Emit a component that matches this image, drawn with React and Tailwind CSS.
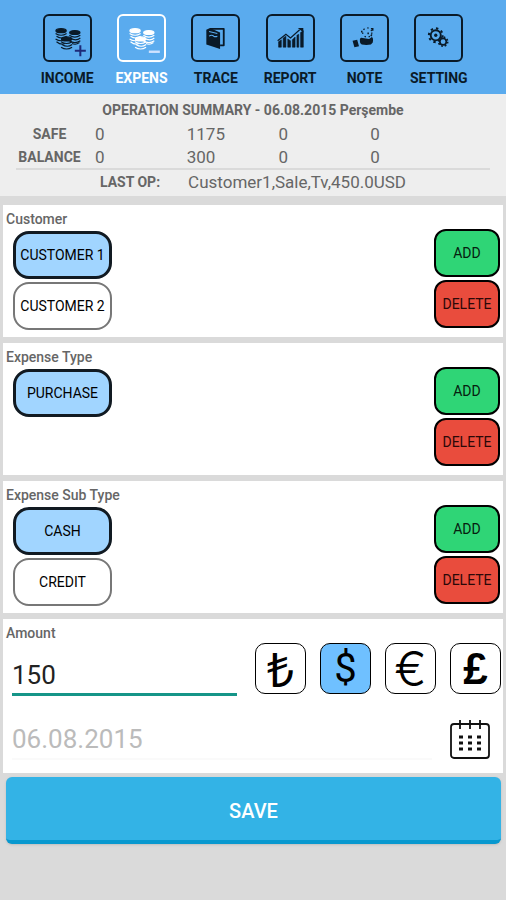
import React, { useState } from 'react';

const CoinsIcon = ({ minus }) => (
    <svg viewBox="0 0 48 48" className="w-full h-full" aria-hidden="true">
        {[[17, 16], [32, 18], [23, 25]].map(([x, y]) => (
            <g key={x} fill="none" stroke="currentColor" strokeWidth="1.3">
                <path d={`M${x - 6} ${y + 3}q6 4 12 0M${x - 5} ${y + 6}q6 4 11 0M${x - 6} ${y + 9}q6 4 12 0`} />
                <ellipse cx={x} cy={y} rx="5.6" ry="2.2" fill="currentColor" />
            </g>
        ))}
        <path d="M12 28q5 4 9 2M29 30q4 2 8-1" fill="none" stroke="currentColor" strokeWidth="1.3" />
        {minus
            ? <path d="M32 39h12" stroke="#cfe2ff" strokeWidth="2.6" />
            : <path d="M32 38h12M38 32v12" stroke="#1d2a78" strokeWidth="2.2" />}
    </svg>
);

const TraceIcon = () => (
    <svg viewBox="0 0 48 48" className="w-full h-full" aria-hidden="true">
        <path d="M18 14h15v18h-4" fill="none" stroke="currentColor" strokeWidth="2" strokeLinejoin="round" />
        <path d="M14 15l4-2 11 5v18l-15-5z" fill="currentColor" />
        <path d="M17 17l9 2M17 22q3-2 5 0 2 1 4 0" fill="none" stroke="#5aabee" strokeWidth="1.2" />
    </svg>
);

const ReportIcon = () => (
    <svg viewBox="0 0 48 48" className="w-full h-full" aria-hidden="true">
        <path d="M11 34v-6l3-2v8zM16 34V24l3-2v12zM21 34v-9l3 2v7zM26 34v-8l3-3v11zM31 34V21l2-1v14zM35 34V18l3-2v18z" fill="currentColor" stroke="currentColor" strokeWidth="0.6" />
        <path d="M10 27l9-7 5 4 10-9" fill="none" stroke="currentColor" strokeWidth="1.3" />
        <path d="M32 13h6v5z" fill="currentColor" />
    </svg>
);

const NoteIcon = () => (
    <svg viewBox="0 0 48 48" className="w-full h-full" aria-hidden="true">
        <path d="M11 27l5-1 2 7-5 1z" fill="currentColor" />
        <path d="M19 25q1-2 3-1l7 1 3-2q2 1 1 6l-2 2q-5 1-10 0-2-1-2-3z" fill="currentColor" />
        <circle cx="27" cy="18" r="5" fill="none" stroke="currentColor" strokeWidth="1.4" strokeDasharray="1.5 3.1" />
        <path d="M31 14h2v2M21 16v2M28 18v2M32 20l-1 2" fill="none" stroke="currentColor" strokeWidth="1.6" />
    </svg>
);

const SettingIcon = () => (
    <svg viewBox="0 0 48 48" className="w-full h-full" aria-hidden="true">
        <g fill="none" stroke="currentColor">
            <circle cx="21" cy="21" r="5.5" strokeWidth="2" />
            <circle cx="21" cy="21" r="7.5" strokeWidth="2.2" strokeDasharray="2.6 3.29" />
            <circle cx="29" cy="28" r="3.5" strokeWidth="1.8" fill="#5aabee" />
            <circle cx="29" cy="28" r="5" strokeWidth="1.8" strokeDasharray="1.9 2.027" />
        </g>
        <circle cx="21" cy="21" r="1.8" fill="currentColor" />
    </svg>
);

const CalendarIcon = () => (
    <svg viewBox="0 0 40 40" className="w-10 h-10" fill="none" stroke="#111" aria-hidden="true">
        <rect x="1" y="4" width="38" height="34" rx="3" strokeWidth="1.8" />
        <path d="M10 0v9M20 0v9M30 0v9" strokeWidth="1.8" />
        <path d="M9 17h22M9 23h22M9 29h22" strokeWidth="3" strokeDasharray="4 5" />
    </svg>
);

const tabs = [
    { name: 'INCOME', icon: <CoinsIcon /> },
    { name: 'EXPENS', icon: <CoinsIcon minus /> },
    { name: 'TRACE', icon: <TraceIcon /> },
    { name: 'REPORT', icon: <ReportIcon /> },
    { name: 'NOTE', icon: <NoteIcon /> },
    { name: 'SETTING', icon: <SettingIcon /> },
];

const currencies = [
    { sign: '₺', name: 'Lira', style: "text-[48px] font-normal font-['Noto_Sans',sans-serif]" },
    { sign: '$', name: 'Dollar', style: 'text-[40px] font-normal' },
    { sign: '€', name: 'Euro', style: "text-[48px] font-light font-['Inter',sans-serif]" },
    { sign: '£', name: 'Pound', style: "text-[44px] font-bold font-['Liberation_Sans',sans-serif]" },
];

const summary = [
    ['SAFE', '0', '1175', '0', '0'],
    ['BALANCE', '0', '300', '0', '0'],
];

const OptionCard = ({ title, options }) => {
    const [selected, setSelected] = useState(options[0]);

    return (
        <section className="flex justify-between bg-white h-[132px] pr-[3px]">
            <div className="pt-1 pl-[3px]">
                <h2 className="text-sm leading-5 font-medium text-[#666]">{title}</h2>
                <div className="flex flex-col gap-[3px] pt-[2px] pl-[7px]">
                    {options.map((option) => (
                        <button
                            key={option}
                            type="button"
                            onClick={() => setSelected(option)}
                            className={`w-[99px] h-12 rounded-2xl text-sm text-black whitespace-nowrap ${selected === option ? 'border-[3px] border-[#111a22] bg-[#a1d5ff]' : 'border-2 border-[#777] bg-white'}`}
                        >
                            {option}
                        </button>
                    ))}
                </div>
            </div>
            <div className="flex flex-col gap-[3px] pt-6">
                <button type="button" className="w-[66px] h-12 rounded-xl border-2 border-black bg-[#2fd576] text-sm text-[#06200f]">ADD</button>
                <button type="button" className="w-[66px] h-12 rounded-xl border-2 border-black bg-[#e94c3d] text-sm text-[#2b0808]">DELETE</button>
            </div>
        </section>
    );
};

export default function App() {
    const [tab, setTab] = useState('EXPENS');
    const [currency, setCurrency] = useState('$');
    const [amount, setAmount] = useState('150');

    return (
        <div className="min-h-screen bg-[#dadada] font-['Roboto',sans-serif]">
            <nav className="flex h-[94px] px-[30px] pt-[14px] bg-[#5aabee]">
                {tabs.map(({ name, icon }) => (
                    <button
                        key={name}
                        type="button"
                        onClick={() => setTab(name)}
                        className={`flex-1 flex flex-col items-center ${tab === name ? 'text-white' : 'text-[#0a1a28]'}`}
                    >
                        <span className="w-[49px] h-12 rounded-md border-2 border-current">{icon}</span>
                        <span className="pt-[6px] text-sm leading-5 font-bold">{name}</span>
                    </button>
                ))}
            </nav>

            <header className="h-[102px] px-4 pt-[6px] bg-[#eee] text-[#666]">
                <h1 className="text-center text-sm leading-5 font-bold">OPERATION SUMMARY - 06.08.2015 Perşembe</h1>
                <div className="pr-7 pt-[2px] border-b-2 border-[#dadada]">
                    <table className="w-full table-fixed">
                        <tbody>
                            {summary.map(([label, ...values]) => (
                                <tr key={label} className="h-[23px]">
                                    <th className="w-[79px] p-0 pr-3 text-sm leading-5 font-bold">{label}</th>
                                    {values.map((value, i) => (
                                        <td key={i} className="p-0 text-[17px] leading-5">{value}</td>
                                    ))}
                                </tr>
                            ))}
                        </tbody>
                    </table>
                </div>
                <p className="flex items-center justify-center gap-7 pt-[2px] leading-5">
                    <span className="text-sm leading-5 font-bold">LAST OP:</span>
                    <span className="text-[17px] leading-5">Customer1,Sale,Tv,450.0USD</span>
                </p>
            </header>

            <main className="flex flex-col gap-[6px] px-[3px] pt-[9px]">
                <OptionCard title="Customer" options={['CUSTOMER 1', 'CUSTOMER 2']} />
                <OptionCard title="Expense Type" options={['PURCHASE']} />
                <OptionCard title="Expense Sub Type" options={['CASH', 'CREDIT']} />

                <section className="bg-white h-[154px] pt-1 pl-[3px]">
                    <label htmlFor="amount" className="block text-sm leading-5 font-medium text-[#666]">Amount</label>
                    <div className="flex items-start justify-between gap-[18px] pl-[6px] pr-[2px]">
                        <input
                            id="amount"
                            value={amount}
                            onChange={(e) => setAmount(e.target.value)}
                            className="flex-1 min-w-0 h-[53px] pt-[14px] border-b-[3px] border-[#159588] text-[26px] leading-8 text-[#222] outline-none"
                        />
                        <div className="flex gap-[14px]">
                            {currencies.map(({ sign, name, style }) => (
                                <button
                                    key={sign}
                                    type="button"
                                    aria-label={name}
                                    onClick={() => setCurrency(sign)}
                                    className={`flex items-center justify-center w-[51px] h-[51px] rounded-[10px] border border-black text-black leading-none ${style} ${currency === sign ? 'bg-[#6fc0ff]' : 'bg-white'}`}
                                >
                                    {sign}
                                </button>
                            ))}
                        </div>
                    </div>
                    <div className="flex items-center gap-[18px] pt-6 pl-[6px] pr-[13px]">
                        <input
                            aria-label="Date"
                            value="06.08.2015"
                            readOnly
                            className="flex-1 min-w-0 h-10 border-b-2 border-[#fafafa] text-[26px] leading-8 text-[#bbb] outline-none"
                        />
                        <button type="button" aria-label="Pick date"><CalendarIcon /></button>
                    </div>
                </section>
            </main>

            <div className="pt-1 pl-[6px] pr-[5px]">
                <button type="submit" className="w-full h-[67px] pt-1 rounded-md border-b-4 border-[#0798cf] bg-[#33b3e6] shadow-sm text-xl font-medium text-white">SAVE</button>
            </div>
        </div>
    );
}
